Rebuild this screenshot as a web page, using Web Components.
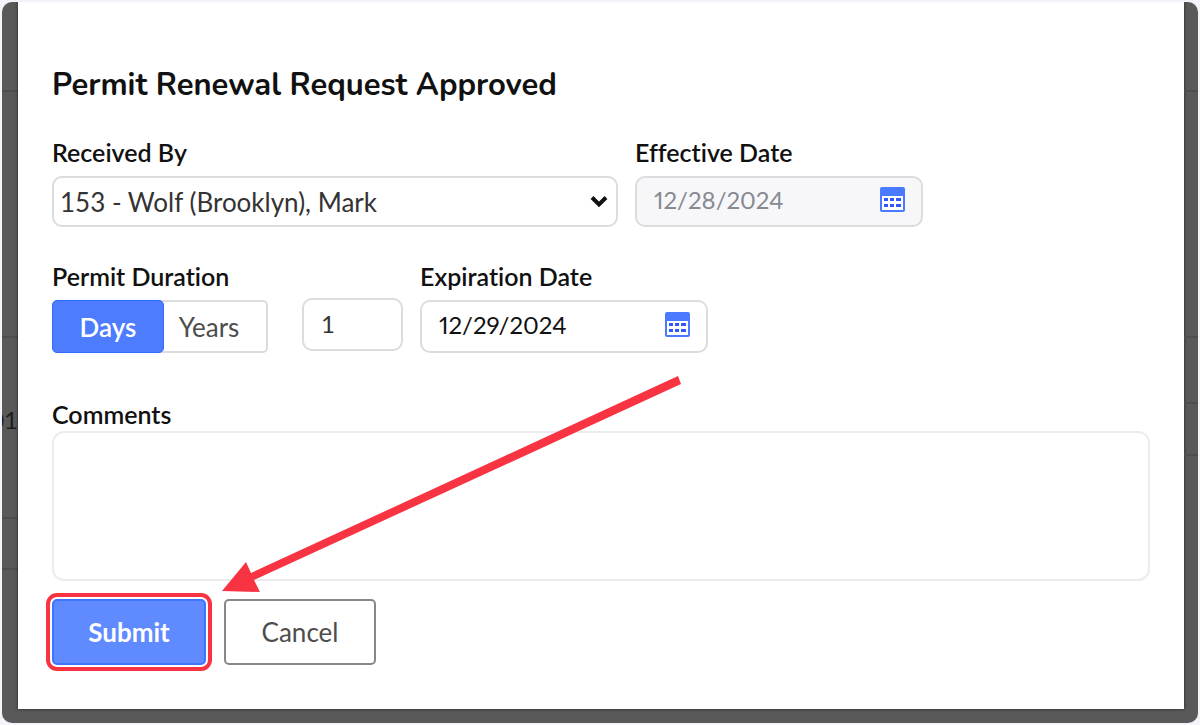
<!DOCTYPE html>
<html lang="en">
<head>
<meta charset="utf-8">
<meta name="viewport" content="width=device-width, initial-scale=1">
<title>Permit Renewal Request Approved</title>
<style>
    body {
        margin: 0;
        background: #f3f3f9;
        font-family: Lato, "Open Sans", sans-serif;
        font-size: 26px;
        font-variant-ligatures: none;
        color: #111;
    }
</style>
</head>
<body>

<permit-page>
    <page-rows slot="left" heights="89,245,180,50" text="01" text-row="2"></page-rows>
    <permit-dialog heading="Permit Renewal Request Approved">
        <form-row>
            <select-field label="Received By" value="153 - Wolf (Brooklyn), Mark"></select-field>
            <date-field label="Effective Date" value="12/28/2024" disabled></date-field>
        </form-row>
        <form-row>
            <duration-field label="Permit Duration" options="Days,Years" amount="1"></duration-field>
            <date-field label="Expiration Date" value="12/29/2024"></date-field>
        </form-row>
        <comments-field label="Comments"></comments-field>
        <action-bar>
            <action-button primary>Submit</action-button>
            <action-button>Cancel</action-button>
            <pointer-arrow slot="pointer"></pointer-arrow>
        </action-bar>
    </permit-dialog>
    <page-rows slot="right" heights="89,245,65,51"></page-rows>
</permit-page>

<script>
// styles shared by every field
const fieldStyles = `
    <style>
        * {
            box-sizing: border-box;
        }

        :host {
            display: block;
        }

        label, .label {
            display: block;
            font-size: 25px;
            font-weight: 600;
            line-height: 30px;
            margin-bottom: 9px;
            white-space: nowrap;
        }

        input, select, textarea, button {
            font: inherit;
            color: inherit;
            margin: 0;
        }

        input, select {
            width: 100%;
            border: 2px solid #dcdcdc;
            border-radius: 10px;
            background: white;
            outline: none;
        }
    </style>
`;

function define(name, html, setup) {
    const template = document.createElement('template');
    template.innerHTML = html;

    customElements.define(name, class extends HTMLElement {
        constructor() {
            super();
            const shadow = this.attachShadow({ mode: 'open' });
            shadow.appendChild(template.content.cloneNode(true));
        }

        connectedCallback() {
            if (setup) setup(this, this.shadowRoot);
        }
    });
}

define('permit-page', `
    <style>
        :host {
            display: block;
            padding: 2px;
        }

        .frame {
            display: grid;
            grid-template-columns: 16px 1fr 14px;
            padding-bottom: 14px;
            border-radius: 10px;
            background: #595959;
            overflow: hidden;
        }
    </style>
    <main class="frame">
        <slot name="left"></slot>
        <slot></slot>
        <slot name="right"></slot>
    </main>
`);

// table rows of the dimmed page behind the dialog
define('page-rows', `
    <style>
        :host {
            display: flex;
            flex-direction: column;
            overflow: hidden;
        }

        div {
            display: flex;
            align-items: center;
            justify-content: flex-end;
            box-sizing: border-box;
            padding-bottom: 16px;
            border-bottom: 2px solid #4e4e4e;
            color: #1c1c1c;
            font-size: 24px;
        }
    </style>
`, (el, root) => {
    el.getAttribute('heights').split(',').forEach((height, i) => {
        const row = document.createElement('div');
        row.style.height = (Number(height) + 1) + 'px';
        if (el.getAttribute('text-row') === String(i)) row.textContent = el.getAttribute('text');
        root.appendChild(row);
    });
});

define('permit-dialog', `
    <style>
        :host {
            display: block;
            background: white;
            padding: 65px 34px 44px;
            box-shadow: 0 0 3px #222;
        }

        h1 {
            margin: 0 0 34px;
            font-family: Nunito, Lato, sans-serif;
            font-size: 31px;
            line-height: 36px;
            font-weight: 700;
        }
    </style>
    <h1></h1>
    <slot></slot>
`, (el, root) => {
    root.querySelector('h1').textContent = el.getAttribute('heading');
});

define('form-row', `
    <style>
        :host {
            display: flex;
            align-items: flex-start;
            gap: 17px;
            margin-bottom: 34px;
        }
    </style>
    <slot></slot>
`);

define('select-field', fieldStyles + `
    <style>
        :host {
            flex: 0 1 566px;
        }

        .box {
            display: grid;
            align-items: center;
        }

        select, svg {
            grid-area: 1 / 1;
        }

        select {
            appearance: none;
            height: 51px;
            padding: 0 40px 0 6px;
            color: #333;
        }

        svg {
            justify-self: end;
            margin-right: 10px;
            pointer-events: none;
        }
    </style>
    <label for="control"></label>
    <div class="box">
        <select id="control"></select>
        <svg width="18" height="13" viewBox="0 0 18 13" fill="none" stroke="#111" stroke-width="4">
            <path d="M2 2.5 L9 9.5 L16 2.5"/>
        </svg>
    </div>
`, (el, root) => {
    root.querySelector('label').textContent = el.getAttribute('label');
    root.querySelector('select').add(new Option(el.getAttribute('value')));
});

define('date-field', fieldStyles + `
    <style>
        :host {
            flex: 0 1 288px;
        }

        .box {
            display: grid;
            align-items: center;
        }

        input, button {
            grid-area: 1 / 1;
        }

        input {
            height: 53px;
            padding: 0 60px 4px 17px;
            font-size: 24px;
            font-variant-numeric: proportional-nums;
        }

        :host([disabled]) input {
            height: 51px;
            background: #f7f7fa;
            color: #868a90;
        }

        button {
            justify-self: end;
            margin: 0 18px 4px 0;
            padding: 0;
            border: 0;
            background: none;
            line-height: 0;
        }
    </style>
    <label for="control"></label>
    <div class="box">
        <input id="control" type="text">
        <button type="button" aria-label="Open calendar">
            <svg width="25" height="25" viewBox="0 0 25 25">
                <rect width="25" height="25" rx="2" fill="#4a7aff"/>
                <path fill="white" d="M2 9h21v14H2z"/>
                <path fill="#3058ff" d="M4 11h4v3H4zM10 11h4v3h-4zM16 11h5v3h-5zM4 17h4v3H4zM10 17h4v3h-4zM16 17h5v3h-5z"/>
            </svg>
        </button>
    </div>
`, (el, root) => {
    const input = root.querySelector('input');
    root.querySelector('label').textContent = el.getAttribute('label');
    input.value = el.getAttribute('value');
    input.disabled = el.hasAttribute('disabled');
});

define('duration-field', fieldStyles + `
    <style>
        .line {
            display: flex;
            align-items: center;
            gap: 34px;
        }

        .toggle {
            display: flex;
            width: 216px;
            height: 53px;
            border: 2px solid #dcdcdc;
            border-radius: 5px;
        }

        button {
            flex: 1;
            padding: 0;
            border: 0;
            background: none;
            color: #4d4d4d;
        }

        button[aria-pressed="true"] {
            flex: 0 0 112px;
            margin: -2px 0 -2px -2px;
            border: 1px solid #336aff;
            border-radius: 5px;
            background: #4d7cff;
            color: white;
            font-weight: 600;
        }

        button[aria-pressed="false"] {
            padding-right: 12px;
        }

        input {
            width: 101px;
            height: 53px;
            margin-bottom: 4px;
            padding: 0 17px 3px;
            font-size: 24px;
            color: #333;
        }

        .label {
            margin-bottom: 7px;
        }
    </style>
    <div class="label" id="label"></div>
    <div class="line">
        <div class="toggle" role="group" aria-labelledby="label"></div>
        <input type="text" inputmode="numeric" aria-label="Amount">
    </div>
`, (el, root) => {
    root.querySelector('.label').textContent = el.getAttribute('label');
    root.querySelector('input').value = el.getAttribute('amount');
    const toggle = root.querySelector('.toggle');
    if (toggle.children.length) return;
    el.getAttribute('options').split(',').forEach((text, i) => {
        const button = document.createElement('button');
        button.type = 'button';
        button.textContent = text;
        button.setAttribute('aria-pressed', i === 0);
        toggle.appendChild(button);
    });
});

define('comments-field', fieldStyles + `
    <style>
        :host {
            padding-top: 10px;
        }

        label {
            margin-bottom: 2px;
        }

        textarea {
            display: block;
            width: 100%;
            height: 150px;
            padding: 8px 17px;
            border: 2px solid #ebebf0;
            border-radius: 12px;
            outline: none;
            resize: none;
        }
    </style>
    <label for="control"></label>
    <textarea id="control"></textarea>
`, (el, root) => {
    root.querySelector('label').textContent = el.getAttribute('label');
});

define('action-bar', `
    <style>
        :host {
            display: flex;
            gap: 18px;
            margin-top: 18px;
            position: relative;
        }

        /* the pointer floats over the form and ends at the submit button */
        ::slotted([slot="pointer"]) {
            position: absolute;
            left: 170px;
            bottom: 73px;
            pointer-events: none;
        }
    </style>
    <slot></slot>
    <slot name="pointer"></slot>
`);

define('action-button', `
    <style>
        :host {
            display: block;
        }

        button {
            display: block;
            min-width: 152px;
            height: 66px;
            padding: 0 32px;
            border: 2px solid #888;
            border-radius: 5px;
            background: white;
            color: #4d4d4d;
            font: inherit;
        }

        :host([primary]) button {
            min-width: 154px;
            border-color: #3f74ff;
            background: #608aff;
            color: white;
            font-weight: 700;
            outline: 4px solid #f83442;
            outline-offset: 2px;
        }
    </style>
    <button type="button"><slot></slot></button>
`);

define('pointer-arrow', `
    <style>
        :host {
            display: block;
            line-height: 0;
        }
    </style>
    <svg width="460" height="216" viewBox="0 0 460 216" aria-hidden="true" fill="#f83442">
        <path d="M0 215 L24 186 L29 197 L456 0 L459 8 L32 204 L38 216 Z"/>
    </svg>
`);
</script>
</body>
</html>
